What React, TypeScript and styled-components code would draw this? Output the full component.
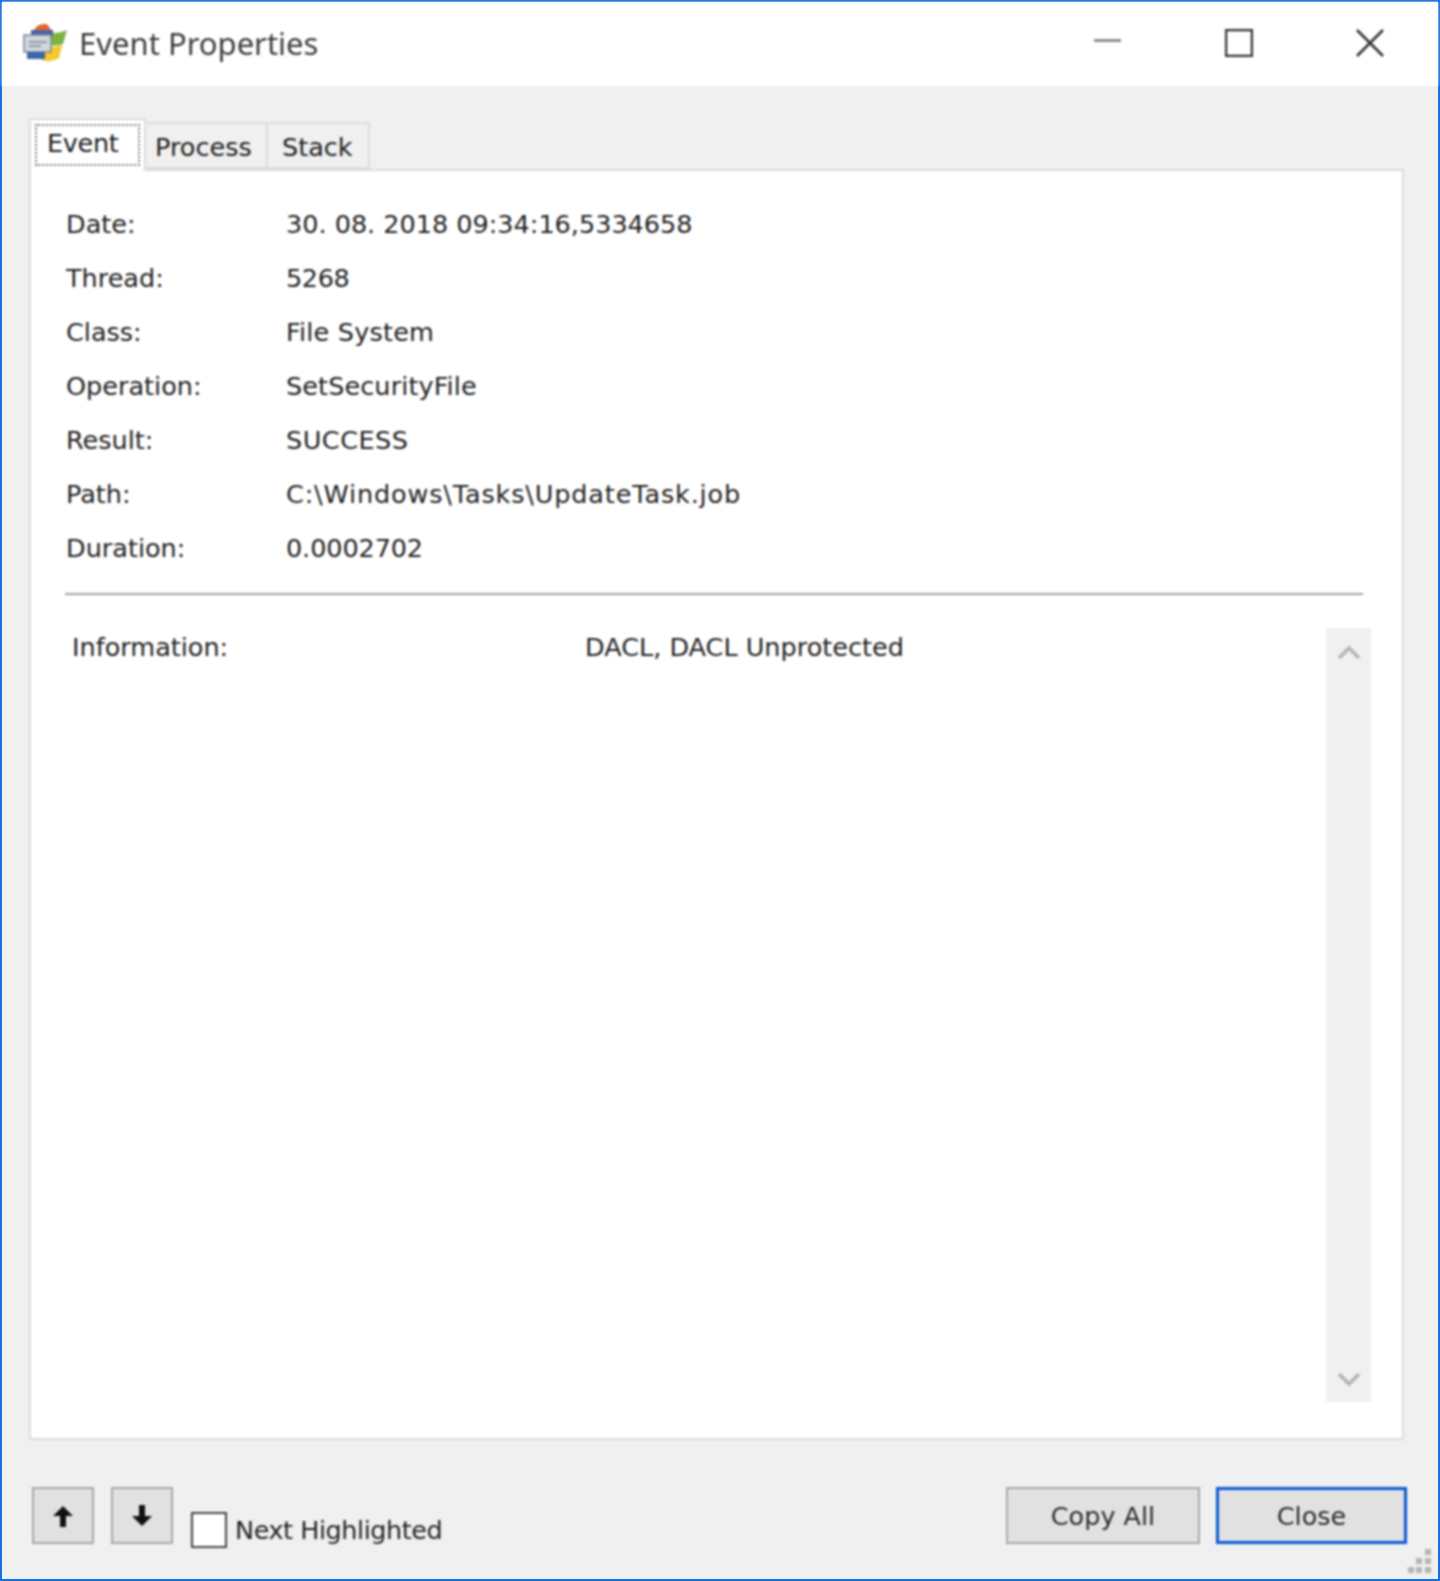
import React from "react";
import styled, { createGlobalStyle } from "styled-components";

// --- Data ---
const fields = [
  { label: "Date:", value: "30. 08. 2018 09:34:16,5334658", spacing: 0 },
  { label: "Thread:", value: "5268", spacing: -0.4 },
  { label: "Class:", value: "File System", spacing: 0.2 },
  { label: "Operation:", value: "SetSecurityFile", spacing: 0.1 },
  { label: "Result:", value: "SUCCESS", spacing: 0.5 },
  { label: "Path:", value: "C:\\Windows\\Tasks\\UpdateTask.job", spacing: 0.85 },
  { label: "Duration:", value: "0.0002702", spacing: -0.1 },
];

// --- Styles ---
const GlobalStyle = createGlobalStyle`
  html, body {
    margin: 0;
    background: #fff;
  }
  * {
    box-sizing: border-box;
  }
`;

const Window = styled.div`
  width: 1440px;
  height: 1581px;
  display: flex;
  flex-direction: column;
  border: 2px solid #1470dc;
  background: #f0f0f0;
  font-family: "DejaVu Sans", sans-serif;
  font-size: 25.5px;
  color: #1f1f1f;
`;

const TitleBar = styled.header`
  height: 84px;
  flex: none;
  display: flex;
  align-items: center;
  background: #fff;
  padding: 0 3px 2px 21px;
  filter: blur(0.8px);
`;

const Title = styled.h1`
  flex: 1;
  margin: 0 0 0 12px;
  font-family: "Noto Sans", sans-serif;
  font-size: 31px;
  font-weight: 400;
  color: #3c3c3c;
`;

const WindowButton = styled.div`
  width: 131px;
  height: 82px;
  display: flex;
  align-items: center;
  justify-content: center;
`;

const Body = styled.main`
  flex: 1;
  min-height: 0;
  position: relative;
  display: flex;
  flex-direction: column;
  padding: 32px 34px 0 27px;
  filter: blur(0.8px);
`;

const TabStrip = styled.div`
  height: 51px;
  flex: none;
  display: flex;
  align-items: flex-end;
  position: relative;
  z-index: 1;
`;

const Tab = styled.div<{ $width: number; $inset: number }>`
  width: ${(p) => p.$width}px;
  height: 47px;
  padding: 3px 0 0 ${(p) => p.$inset}px;
  display: flex;
  align-items: center;
  background: #f0f0f0;
  border: 2px solid #dcdcdc;
  border-left: none;
`;

const ActiveTab = styled.div`
  width: 117px;
  height: 53px;
  margin-bottom: -2px;
  padding: 4px;
  background: #fff;
  border: 2px solid #dcdcdc;
  border-bottom: none;
`;

const TabFocus = styled.span`
  width: 100%;
  height: 42px;
  padding: 0 0 5px 10px;
  display: flex;
  align-items: center;
  border: 2px dotted #777;
  color: #1c1c1c;
  letter-spacing: -0.3px;
`;

const Panel = styled.section`
  flex: 1;
  min-height: 0;
  display: flex;
  flex-direction: column;
  background: #fff;
  border: 2px solid #dcdcdc;
  padding: 26px 31px 36px 27px;
`;

const FieldRow = styled.div`
  height: 54px;
  padding-left: 8px;
  display: grid;
  grid-template-columns: 220px 1fr;
  align-items: center;
`;

const FieldValue = styled.span<{ $spacing: number }>`
  letter-spacing: ${(p) => p.$spacing}px;
`;

const Separator = styled.hr`
  width: 1298px;
  height: 2px;
  flex: none;
  margin: 18px 0 33px 7px;
  border: none;
  background: #a0a0a0;
`;

const DetailList = styled.div`
  flex: 1;
  min-height: 0;
  display: flex;
`;

const DetailRow = styled.div`
  flex: 1;
  height: 38px;
  padding-left: 14px;
  display: grid;
  grid-template-columns: 513px 1fr;
  align-items: center;
`;

const ScrollBar = styled.div`
  width: 45px;
  flex: none;
  display: flex;
  flex-direction: column;
  align-items: center;
  justify-content: space-between;
  padding: 17px 0 15px;
  background: #f0f0f0;
`;

const Footer = styled.footer`
  height: 139px;
  flex: none;
  display: flex;
  align-items: flex-start;
  padding: 47px 0 0 3px;
  margin-right: -3px;
`;

const Button = styled.button<{ $primary?: boolean; $width: number }>`
  width: ${(p) => p.$width}px;
  height: 57px;
  padding: 0;
  display: flex;
  align-items: center;
  justify-content: center;
  background: #e1e1e1;
  border: ${(p) => (p.$primary ? "3px solid #0a58d4" : "2px solid #a8a8a8")};
  font: inherit;
  color: #2a2a2a;
`;

const NextButton = styled(Button)`
  margin-left: 17px;
`;

const CheckLabel = styled.label`
  margin: 25px 0 0 18px;
  flex: 1;
  display: flex;
  align-items: center;
  gap: 8px;
  letter-spacing: -0.45px;
`;

const CheckBox = styled.span`
  width: 36px;
  height: 36px;
  background: #fff;
  border: 2px solid #444;
`;

const CopyButton = styled(Button)`
  margin-right: 16px;
`;

const Grip = styled.svg`
  position: absolute;
  right: 6px;
  bottom: 6px;
`;

// --- Icons ---
const AppIcon = () => (
  <svg width="44" height="40" viewBox="0 0 44 40">
    <path d="M24 9 Q33 12 44 7 L40 21 Q32 24 25 21 Z" fill="#7cb342" />
    <path d="M21 22 Q31 25 39 22 L36 35 Q27 41 17 36 Z" fill="#f4c92b" />
    <path d="M11 8 Q13 0 24 1 L29 8 Z" fill="#e2672c" />
    <rect x="8" y="7" width="22" height="6" fill="#4a62a8" />
    <rect x="1" y="12" width="27" height="17" fill="#cfd6de" stroke="#7d8794" strokeWidth="1.5" />
    <path d="M6 19 H24 M6 23 H18" stroke="#7d8794" strokeWidth="1.5" />
    <rect x="4" y="29" width="18" height="7" fill="#3f67a8" />
  </svg>
);

const MinimizeIcon = () => (
  <svg width="28" height="28" viewBox="0 0 28 28">
    <path d="M0 11.5 H27" stroke="#777" strokeWidth="2.5" />
  </svg>
);

const MaximizeIcon = () => (
  <svg width="28" height="28" viewBox="0 0 28 28">
    <rect x="1" y="1" width="26" height="26" fill="none" stroke="#333" strokeWidth="2.5" />
  </svg>
);

const CloseIcon = () => (
  <svg width="28" height="28" viewBox="0 0 28 28">
    <path d="M1 1 L27 27 M27 1 L1 27" stroke="#333" strokeWidth="2.5" />
  </svg>
);

const Chevron = ({ down }: { down?: boolean }) => (
  <svg width="22" height="15" viewBox="0 0 22 15">
    <path
      d={down ? "M1 2 L11 12 L21 2" : "M1 13 L11 3 L21 13"}
      fill="none"
      stroke="#b4b4b4"
      strokeWidth="3.5"
    />
  </svg>
);

const ArrowIcon = ({ down }: { down?: boolean }) => (
  <svg width="20" height="22" viewBox="0 0 20 22">
    <path
      d={
        down
          ? "M7 0 H13 V11 H20 L10 21 L0 11 H7 Z"
          : "M7 22 H13 V11 H20 L10 1 L0 11 H7 Z"
      }
      fill="#111"
    />
  </svg>
);

const GripIcon = () => (
  <Grip width="24" height="24" viewBox="0 0 24 24">
    <path d="M17 0h6v6h-6zM8 9h6v6H8zM17 9h6v6h-6zM0 18h6v6H0zM8 18h6v6H8zM17 18h6v6h-6z" fill="#b4b4b4" />
  </Grip>
);

// --- Page ---
export default function App() {
  return (
    <>
      <GlobalStyle />
      <Window>
        <TitleBar>
          <AppIcon />
          <Title>Event Properties</Title>
          <WindowButton>
            <MinimizeIcon />
          </WindowButton>
          <WindowButton>
            <MaximizeIcon />
          </WindowButton>
          <WindowButton>
            <CloseIcon />
          </WindowButton>
        </TitleBar>
        <Body>
          <TabStrip>
            <ActiveTab>
              <TabFocus>Event</TabFocus>
            </ActiveTab>
            <Tab $width={122} $inset={9}>Process</Tab>
            <Tab $width={102} $inset={14}>Stack</Tab>
          </TabStrip>
          <Panel>
            {fields.map((field) => (
              <FieldRow key={field.label}>
                <span>{field.label}</span>
                <FieldValue $spacing={field.spacing}>{field.value}</FieldValue>
              </FieldRow>
            ))}
            <Separator />
            <DetailList>
              <DetailRow>
                <span>Information:</span>
                <span>DACL, DACL Unprotected</span>
              </DetailRow>
              <ScrollBar>
                <Chevron />
                <Chevron down />
              </ScrollBar>
            </DetailList>
          </Panel>
          <Footer>
            <Button $width={62}>
              <ArrowIcon />
            </Button>
            <NextButton $width={62}>
              <ArrowIcon down />
            </NextButton>
            <CheckLabel>
              <CheckBox />
              Next Highlighted
            </CheckLabel>
            <CopyButton $width={194}>Copy All</CopyButton>
            <Button $primary $width={191}>
              Close
            </Button>
          </Footer>
          <GripIcon />
        </Body>
      </Window>
    </>
  );
}
